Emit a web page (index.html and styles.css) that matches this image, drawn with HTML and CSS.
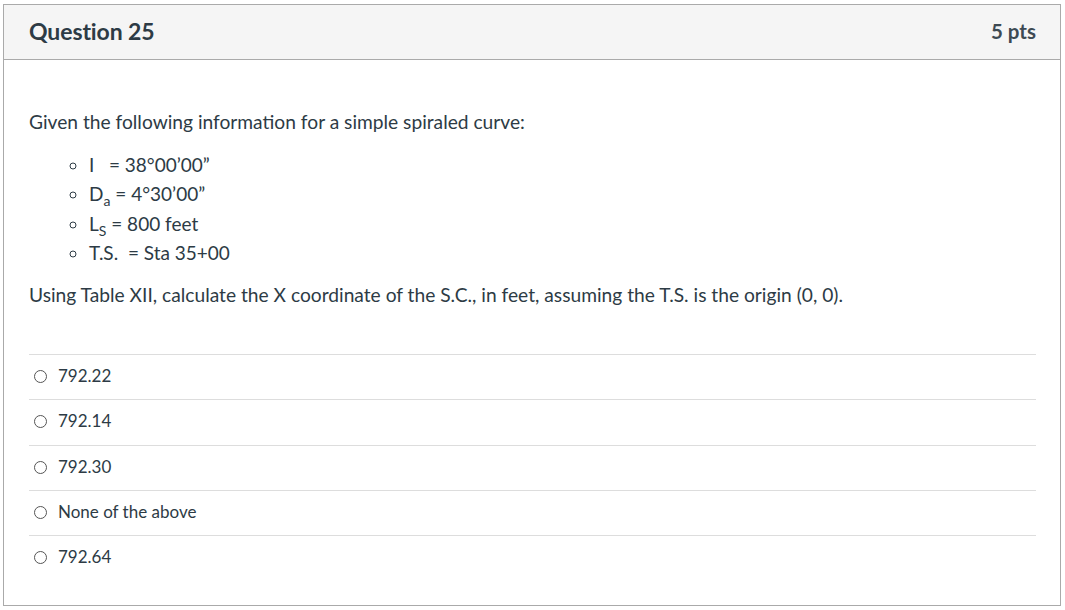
FILE: index.html
```html
<!DOCTYPE html>
<html>
<head>
<meta charset="utf-8">
<link rel="stylesheet" href="styles.css">
</head>
<body>
<div class="question">
  <div class="header">
    <h2 class="title">Question 25</h2>
    <div class="pts">5 pts</div>
  </div>
  <div class="content">
    <p class="intro">Given the following information for a simple spiraled curve:</p>
    <ul class="givens">
      <li>I&nbsp;&nbsp; = 38°00’00”</li>
      <li>D<sub>a</sub> = 4°30’00”</li>
      <li>L<sub>S</sub> = 800 feet</li>
      <li>T.S.&nbsp; = Sta 35+00</li>
    </ul>
    <p class="ask">Using Table XII, calculate the X coordinate of the S.C., in feet, assuming the T.S. is the origin (0, 0).</p>
    <div class="answers">
      <div class="answer"><span class="radio"></span><span>792.22</span></div>
      <div class="answer"><span class="radio"></span><span>792.14</span></div>
      <div class="answer"><span class="radio"></span><span>792.30</span></div>
      <div class="answer"><span class="radio"></span><span>None of the above</span></div>
      <div class="answer"><span class="radio"></span><span>792.64</span></div>
    </div>
  </div>
</div>
</body>
</html>
```
FILE: styles.css
```css
html, body {
  margin: 0;
  padding: 0;
  background: #ffffff;
}
body {
  font-family: Lato, "Open Sans", sans-serif;
  color: #2d3b45;
}
.question {
  margin: 4px 0 0 3px;
  width: 1056px;
  height: 600px;
  border: 1px solid #aaaaaa;
  box-sizing: content-box;
}
.header {
  background: #f5f5f5;
  border-bottom: 1px solid #aaaaaa;
  display: flex;
  align-items: center;
  justify-content: space-between;
  padding: 0 24px 2px 25px;
  box-sizing: border-box;
  height: 55px;
}
.title {
  margin: 0;
  font-size: 23px;
  font-weight: 700;
  letter-spacing: -0.1px;
}
.pts {
  font-size: 20.5px;
  font-weight: 700;
  color: #3d4a53;
}
.content {
  padding: 0 24px 0 25px;
}
.intro {
  margin: 50px 0 0 0;
  font-size: 19.2px;
  line-height: 24px;
}
.givens {
  list-style: circle;
  margin: 16px 0 0 0;
  padding-left: 60px;
  font-size: 19px;
}
.givens li {
  line-height: 29px;
  height: 29.3px;
  padding-left: 0;
}
.givens sub {
  font-size: 14px;
  vertical-align: -5px;
  line-height: 0;
}
.ask {
  margin: 16px 0 0 0;
  font-size: 19.2px;
  line-height: 24px;
}
.answers {
  margin-top: 47px;
}
.answer {
  height: 45.2px;
  border-top: 1px solid #dddddd;
  box-sizing: border-box;
  display: flex;
  align-items: center;
  padding: 0 0 3px 5px;
  font-size: 17px;
}
.radio {
  width: 11px;
  height: 11px;
  border: 1px solid #555555;
  border-radius: 50%;
  margin-right: 11px;
  flex: none;
  position: relative;
  top: 1px;
}
```
